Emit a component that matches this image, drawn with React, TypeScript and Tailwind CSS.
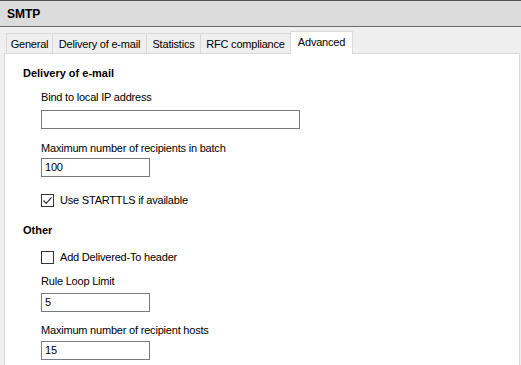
import React from 'react';

const font = { fontFamily: '"Liberation Sans", Arial, sans-serif' };

const tabs = [
  { label: 'General', w: 'w-[46px]' },
  { label: 'Delivery of e-mail', w: 'w-[94px]' },
  { label: 'Statistics', w: 'w-[54px]' },
  { label: 'RFC compliance', w: 'w-[90px]' },
  { label: 'Advanced', w: 'w-[63px]' },
];

function TextBox({ value, wide }: { value?: string; wide?: boolean }) {
  return (
    <div
      className={`h-[19px] border border-[#7a7a7a] bg-white px-[3px] text-[11px] leading-[17px] tracking-[-0.2px] text-black ${
        wide ? 'w-[259px]' : 'w-[109px]'
      }`}
    >
      {value}
    </div>
  );
}

function CheckRow({ label, checked }: { label: string; checked?: boolean }) {
  return (
    <div className="flex h-[15px] items-center gap-[6px]">
      <div className="flex h-[13px] w-[13px] items-center justify-center border border-[#333] bg-white">
        {checked && (
          <svg width="11" height="11" viewBox="0 0 11 11">
            <path d="M1.5 5.5 L4.3 8.3 L9.5 2.3" fill="none" stroke="#333" strokeWidth="1.2" />
          </svg>
        )}
      </div>
      <span className="text-[11px] leading-[15px] tracking-[-0.2px] text-black">{label}</span>
    </div>
  );
}

function Label({ text, mt }: { text: string; mt: string }) {
  return <div className={`${mt} text-[11px] leading-[15px] tracking-[-0.2px]`}>{text}</div>;
}

export default function App() {
  return (
    <div className="h-[365px] w-[521px] overflow-hidden bg-[#f0efef]" style={font}>
      <div className="flex h-[27px] items-center border-t border-b border-t-[#555] border-b-[#6b6b6b] bg-[#dcdcdc] px-[7px]">
        <span className="text-[12px] font-bold text-black">SMTP</span>
      </div>
      <div className="pl-[4px] pt-[4px]">
        <div className="flex h-[22px] items-end pl-[2px]">
          {tabs.map((t) =>
            t.label === 'Advanced' ? (
              <div
                key={t.label}
                className={`${t.w} relative z-10 -mb-px h-[23px] border border-b-0 border-[#d9d9d9] bg-white pt-[3px] text-center text-[11px] leading-[15px] tracking-[-0.2px] text-black`}
              >
                {t.label}
              </div>
            ) : (
              <div
                key={t.label}
                className={`${t.w} h-[20px] border border-r-0 border-b-0 border-[#d9d9d9] bg-[#f0efef] pt-[3px] text-center text-[11px] leading-[15px] tracking-[-0.2px] text-black`}
              >
                {t.label}
              </div>
            )
          )}
        </div>
        <div className="h-[320px] w-[516px] border border-[#d9d9d9] bg-white pl-[18px] pt-[12px] text-black">
          <div className="text-[11px] font-bold leading-[15px]">Delivery of e-mail</div>
          <div className="pl-[18px]">
            <Label text="Bind to local IP address" mt="mt-[9px]" />
            <div className="mt-[5px]">
              <TextBox wide />
            </div>
            <Label text="Maximum number of recipients in batch" mt="mt-[12px]" />
            <div className="mt-[2px]">
              <TextBox value="100" />
            </div>
            <div className="mt-[16px]">
              <CheckRow label="Use STARTTLS if available" checked />
            </div>
          </div>
          <div className="mt-[15px] text-[11px] font-bold leading-[15px]">Other</div>
          <div className="pl-[18px]">
            <div className="mt-[12px]">
              <CheckRow label="Add Delivered-To header" />
            </div>
            <Label text="Rule Loop Limit" mt="mt-[9px]" />
            <div className="mt-[4px]">
              <TextBox value="5" />
            </div>
            <Label text="Maximum number of recipient hosts" mt="mt-[11px]" />
            <div className="mt-[3px]">
              <TextBox value="15" />
            </div>
          </div>
        </div>
      </div>
    </div>
  );
}
